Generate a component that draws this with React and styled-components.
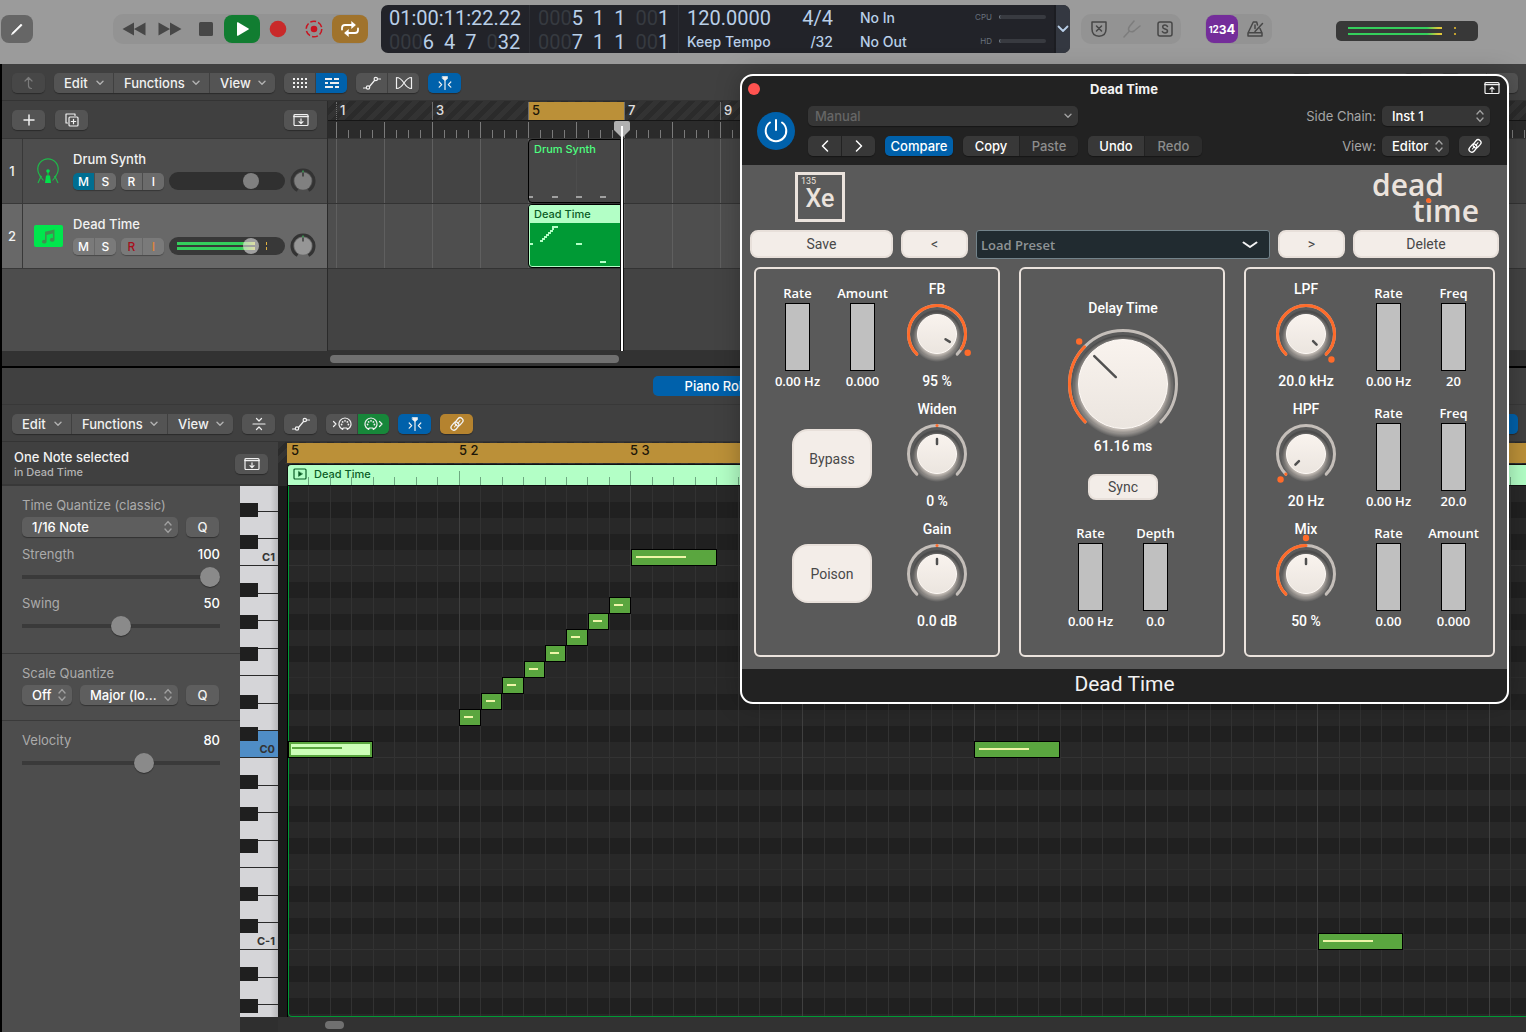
import React, { useState } from "react";
import styled, { createGlobalStyle, css } from "styled-components";

const sans = `Inter, "Liberation Sans", sans-serif`;
const pluginSans = `Roboto, "Liberation Sans", sans-serif`;
const humanist = `"Open Sans", "Noto Sans", sans-serif`;

// piano roll geometry
const CELL = 21.46;
const ROW = 16;
const cellX = i => Math.floor(0.5 + i * CELL);
const noteX = i => Math.floor(i * CELL + 1) || 1;

const notes = [
  { cell: 0, len: 4, row: 16, selected: true },
  { cell: 8, len: 1, row: 14 },
  { cell: 9, len: 1, row: 13 },
  { cell: 10, len: 1, row: 12 },
  { cell: 11, len: 1, row: 11 },
  { cell: 12, len: 1, row: 10 },
  { cell: 13, len: 1, row: 9 },
  { cell: 14, len: 1, row: 8 },
  { cell: 15, len: 1, row: 7 },
  { cell: 16, len: 4, row: 4 },
  { cell: 32, len: 4, row: 16 },
  { cell: 48, len: 4, row: 28 }
];

const octave = [28, 27, 28, 27, 28, 27, 27];
const whiteKeys = [26, 27, 27, ...octave, ...octave, ...octave];
const keyNames = { 2: "C1", 9: "C0", 16: "C-1" };
const blackKeys = [17, 49];
[0, 1, 2].forEach(o => {
  [97, 129, 161, 209, 241].forEach(y => blackKeys.push(y + o * 192));
});

/* ---------- icons ---------- */

const Icon = ({ w = 16, h = 16, children, fill = "none", sw = 1.2 }) => (
  <svg
    width={w}
    height={h}
    viewBox={`0 0 ${w} ${h}`}
    fill={fill}
    stroke={fill === "none" ? "currentColor" : "none"}
    strokeWidth={sw}
    strokeLinecap="round"
    strokeLinejoin="round"
    aria-hidden="true"
  >
    {children}
  </svg>
);

const Chevron = () => (
  <Icon w={8} h={6} sw={1.4}>
    <path d="M1 1.2l3 3 3-3" />
  </Icon>
);

const UpDown = () => (
  <Icon w={8} h={14} sw={1.4}>
    <path d="M1 5l3-3.4L7 5M1 9l3 3.4L7 9" />
  </Icon>
);

const CurveIcon = () => (
  <Icon w={20} h={14}>
    <path d="M1.500 12h3M7.500 10.500l5-6M15.500 3h3" />
    <circle cx="6" cy="11.500" r="1.700" />
    <circle cx="13.800" cy="3" r="1.700" />
  </Icon>
);

const CatchIcon = () => (
  <Icon w={18} h={16}>
    <path d="M9 3v11.500" />
    <path d="M6.500 1.500h5v2.200L9 5.500 6.500 3.700z" fill="currentColor" strokeWidth="0.600" />
    <path d="M3.200 7l2.500 2.600-2.500 2.600M14.800 7l-2.500 2.600 2.500 2.600" />
  </Icon>
);

const PanelIcon = ({ up }) => (
  <Icon w={16} h={14}>
    <rect x="1" y="1.500" width="14" height="11" rx="1" />
    <path d="M1 3.500h14" strokeWidth="1.600" />
    {up ? <path d="M8 11V6.500M6 8.200l2-2 2 2" /> : <path d="M8 5.800v4.500M6 8.600l2 2 2-2" />}
  </Icon>
);

const LinkIcon = () => (
  <Icon w={16} h={16} sw={1.300}>
    <g transform="rotate(-50 8 8)">
      <rect x="0.500" y="5" width="9" height="5.600" rx="2.800" />
      <rect x="6.500" y="5.400" width="9" height="5.600" rx="2.800" />
      <path d="M4 7.900h3.500M9 8.200h3.500" strokeWidth="1" />
    </g>
  </Icon>
);

const MidiIcon = ({ out }) => (
  <Icon w={20} h={14}>
    <g transform={out ? "translate(0 0)" : "translate(6 0)"}>
      <path d="M4.600 12.500a6 6 0 1 1 4.800 0l-.6-1.500H5.200z" />
      <g fill="currentColor" stroke="none">
        <circle cx="3.600" cy="7.500" r=".9" />
        <circle cx="4.600" cy="4.900" r=".9" />
        <circle cx="7" cy="3.800" r=".9" />
        <circle cx="9.400" cy="4.900" r=".9" />
        <circle cx="10.400" cy="7.500" r=".9" />
      </g>
    </g>
    {out ? <path d="M15.500 4.500l2.500 2.500-2.500 2.500" /> : <path d="M1.500 4.500L4 7 1.500 9.500" />}
  </Icon>
);

const DrumIcon = () => (
  <svg width="26" height="28" viewBox="0 0 26 28" fill="none" stroke="#1fb84a" strokeWidth="1.200">
    <path d="M6.800 20.200A10.200 10.200 0 1 1 19.200 20.200" />
    <path d="M13 13v6M6.200 19L3 26M19.800 19L23 26M4.500 18.500l4 5M21.500 18.500l-4 5" />
    <circle cx="13" cy="14" r="1.800" fill="#00e04a" stroke="none" />
    <path d="M11 18.500h4l1 7.500h-6z" fill="#00e04a" stroke="none" />
  </svg>
);

const NoteIcon = () => (
  <svg width="14" height="15" viewBox="0 0 14 15" fill="#3f8f4f">
    <path d="M4 2.800L13.500.5v10.200a2.300 1.900 0 1 1-1.600-1.700V4.500L5.600 6v6.600A2.300 1.900 0 1 1 4 10.900z" />
  </svg>
);

/* ---------- shared parts ---------- */

const GlobalStyle = createGlobalStyle`
  * { box-sizing: border-box; }
  body { margin: 0; background: #000; font-family: ${sans}; font-size: 13px; color: #f2f2f2; }
  button, input, select { font: inherit; color: inherit; margin: 0; padding: 0; border: 0; background: none; }
  h1, h2, h3, p { margin: 0; font-size: inherit; font-weight: inherit; }
  svg { display: block; flex: none; }
`;

const Page = styled.div`
  position: relative;
  display: flex;
  flex-direction: column;
  min-height: 100vh;
  overflow: hidden;
`;

const tones = {
  grey: "#545454",
  dim: "#474747",
  blue: "#0061ab",
  green: "#17873a",
  gold: "#b5832f"
};

const Group = styled.div`
  display: flex;
  flex: none;
  gap: 1px;
  height: 20px;
  border-radius: 5px;
  overflow: hidden;
  box-shadow: 0 1px 1px rgba(0, 0, 0, 0.35);
  margin-left: ${props => (props.$right ? "auto" : "0")};
`;

const Tool = styled.button`
  display: flex;
  align-items: center;
  justify-content: ${props => (props.$menu ? "space-between" : "center")};
  width: ${props => props.$w || 33}px;
  height: 20px;
  padding: ${props => (props.$menu ? "0 9px 0 10px" : "0")};
  font-weight: 500;
  color: ${props => (props.$tone === "dim" ? "#7c7c7c" : "#f0f0f0")};
  background: ${props => tones[props.$tone || "grey"]};
  svg {
    opacity: ${props => (props.$menu ? 0.6 : 1)};
  }
`;

const SelectWrap = styled.span`
  position: relative;
  display: flex;
  align-items: center;
  flex: ${props => (props.$grow ? "1" : "none")};
  width: ${props => (props.$w ? props.$w + "px" : "auto")};
  height: ${props => props.$h || 20}px;
  border-radius: 5px;
  background: ${props => props.$bg || "#5e5e5e"};
  box-shadow: 0 1px 1px rgba(0, 0, 0, 0.35);
  svg {
    position: absolute;
    right: 6px;
    color: #a0a0a0;
    pointer-events: none;
  }
`;

const Select = styled.select`
  appearance: none;
  width: 100%;
  height: 100%;
  padding: 0 ${props => (props.$tight ? 7 : 10)}px;
  font-weight: 500;
  color: ${props => props.$color || "#fff"};
`;

const MenuGroup = () => (
  <Group>
    <Tool $menu $w={59}>
      Edit <Chevron />
    </Tool>
    <Tool $menu $w={95}>
      Functions <Chevron />
    </Tool>
    <Tool $menu $w={65}>
      View <Chevron />
    </Tool>
  </Group>
);

const Toolbar = styled.div`
  display: flex;
  align-items: center;
  gap: 9px;
  height: ${props => props.$h || 37}px;
  padding: 2px 8px 0 10px;
  background: #404040;
  border-bottom: 1px solid #343434;
`;

/* ---------- control bar ---------- */

const ControlBar = styled.header`
  display: flex;
  align-items: center;
  height: 64px;
  padding: 0 48px 6px 1px;
  background: #9b9b9b;
`;

const ModeButton = styled.button`
  display: flex;
  align-items: center;
  justify-content: center;
  width: 32px;
  height: 28px;
  border-radius: 8px;
  background: #666;
  color: #fff;
`;

const Cluster = styled.div`
  display: flex;
  align-items: center;
  flex: none;
  height: 30px;
  border-radius: 10px;
  background: #939393;
  padding-left: ${props => props.$pad || 0}px;
  margin-left: ${props => props.$gap}px;
`;

const ClusterButton = styled.button`
  display: flex;
  align-items: center;
  justify-content: center;
  width: ${props => props.$w || 36}px;
  height: 28px;
  border-radius: 8px;
  background: ${props => props.$bg || "transparent"};
  color: ${props => props.$color || "#474747"};
`;

const CountIn = styled.span`
  font-size: ${props => props.$size}px;
  font-weight: 700;
`;

const Lcd = styled.div`
  display: flex;
  flex: 1;
  height: 48px;
  margin-left: 13px;
  border-radius: 7px;
  overflow: hidden;
  background: #222329;
  color: #b9cfe8;
`;

const LcdCol = styled.div`
  display: flex;
  flex: none;
  flex-direction: column;
  align-items: ${props => props.$align || "flex-start"};
  justify-content: center;
  width: ${props => props.$w}px;
  padding: 1px ${props => (props.$align ? 18 : 7)}px 0 8px;
  border-right: 1px solid ${props => (props.$line ? "#2c2e34" : "transparent")};
`;

const LcdRow = styled.div`
  display: flex;
  gap: 10px;
  height: 24px;
  line-height: 24px;
  white-space: nowrap;
  font-family: ${props => (props.$word ? sans : pluginSans)};
  font-size: ${props => (props.$word ? 14 : 20)}px;
  font-weight: ${props => (props.$word ? 500 : 400)};
`;

const Faint = styled.span`
  color: #363a40;
`;

const LoadCol = styled.div`
  display: flex;
  flex: 1;
  flex-direction: column;
  align-items: flex-end;
  justify-content: center;
  gap: 14px;
  padding: 0 8px 1px 0;
`;

const Load = styled.div`
  display: flex;
  align-items: center;
  gap: 7px;
  font-size: 8px;
  line-height: 10px;
  color: #69727d;
`;

const LoadMeter = styled.span`
  width: 47px;
  height: 4px;
  border-radius: 2px;
  background: #383a40;
  border-left: 1px solid #74808c;
`;

const LcdMore = styled.button`
  display: flex;
  align-items: center;
  justify-content: center;
  width: 16px;
  background: #343841;
  border-left: 2px solid #1c1d22;
  color: #b9cfe8;
`;

const MasterMeter = styled.div`
  flex: none;
  width: 142px;
  height: 20px;
  margin-left: 64px;
  margin-top: 4px;
  padding: 6px 36px 0 12px;
  border-radius: 5px;
  background: linear-gradient(#c2a030, #c2a030) 118px 6px / 2px 2px no-repeat,
    linear-gradient(#c2a030, #c2a030) 118px 12px / 2px 2px no-repeat, #383838;
`;

const MeterLine = styled.div`
  height: 2px;
  margin-bottom: 4px;
  background: linear-gradient(90deg, #34cf5c 0 84%, #e0c83a 96%);
`;

const digits = (faint, rest) => (
  <span>
    <Faint>{faint}</Faint>
    {rest}
  </span>
);

const TopBar = () => (
  <ControlBar>
    <ModeButton aria-label="Pencil">
      <Icon w={16} h={16} sw={1.800}>
        <path d="M2.500 13.500l1-2L12 3l1.200 1.200-8.700 8.500z" fill="currentColor" strokeWidth=".5" />
      </Icon>
    </ModeButton>
    <Cluster $gap={80} $pad={3}>
      <ClusterButton aria-label="Rewind">
        <Icon w={24} h={14} fill="#474747">
          <path d="M12 .5v13L.500 7zM23.500.5v13L12 7z" />
        </Icon>
      </ClusterButton>
      <ClusterButton aria-label="Forward">
        <Icon w={24} h={14} fill="#474747">
          <path d="M.5.5v13L12 7zM12 .5v13L23.500 7z" />
        </Icon>
      </ClusterButton>
      <ClusterButton aria-label="Stop">
        <Icon w={14} h={14} fill="#474747">
          <rect width="14" height="14" rx="1.500" />
        </Icon>
      </ClusterButton>
      <ClusterButton aria-label="Play" $bg="#117d31">
        <Icon w={16} h={14} fill="#fff">
          <path d="M3 .8v12.400q0 1 1 .5L14.500 7.500q.8-.5 0-1L4 .3q-1-.5-1 .5z" />
        </Icon>
      </ClusterButton>
      <ClusterButton aria-label="Record">
        <Icon w={18} h={18} fill="#c92a2a">
          <circle cx="9" cy="9" r="8.300" />
        </Icon>
      </ClusterButton>
      <ClusterButton aria-label="Capture recording" $color="#c81420">
        <Icon w={18} h={18} sw={1.500}>
          <circle cx="9" cy="9" r="7.800" strokeDasharray="6 2.170" strokeLinecap="butt" />
          <circle cx="9" cy="9" r="3.300" fill="currentColor" stroke="none" />
        </Icon>
      </ClusterButton>
      <ClusterButton aria-label="Cycle" $bg="#a0732c" $color="#fff">
        <Icon w={20} h={16} sw={1.800}>
          <path d="M2 8.500V7q0-3 3-3h9M18 7.500V9q0 3-3 3H6" />
          <path d="M11.800.8L15.500 4l-3.700 3.200zM8.200 8.800L4.500 12l3.700 3.200z" fill="currentColor" strokeWidth=".6" />
        </Icon>
      </ClusterButton>
    </Cluster>
    <Lcd>
      <LcdCol $w={149} $line>
        <LcdRow>01:00:11:22.22</LcdRow>
        <LcdRow>
          {digits("000", "6")}
          <span>4</span>
          <span>7</span>
          {digits("0", "32")}
        </LcdRow>
      </LcdCol>
      <LcdCol $w={149} $line>
        <LcdRow>
          {digits("000", "5")}
          <span>1</span>
          <span>1</span>
          {digits("00", "1")}
        </LcdRow>
        <LcdRow>
          {digits("000", "7")}
          <span>1</span>
          <span>1</span>
          {digits("00", "1")}
        </LcdRow>
      </LcdCol>
      <LcdCol $w={106}>
        <LcdRow>120.0000</LcdRow>
        <LcdRow $word>Keep Tempo</LcdRow>
      </LcdCol>
      <LcdCol $w={67} $align="flex-end">
        <LcdRow>4/4</LcdRow>
        <LcdRow $word>/32</LcdRow>
      </LcdCol>
      <LcdCol $w={80}>
        <LcdRow $word>No In</LcdRow>
        <LcdRow $word>No Out</LcdRow>
      </LcdCol>
      <LoadCol>
        <Load>
          CPU <LoadMeter />
        </Load>
        <Load>
          HD <LoadMeter />
        </Load>
      </LoadCol>
      <LcdMore aria-label="Display mode">
        <Icon w={12} h={8} sw={1.800}>
          <path d="M1.500 1.500L6 6l4.500-4.500" />
        </Icon>
      </LcdMore>
    </Lcd>
    <Cluster $gap={11} $pad={1}>
      <ClusterButton $w={33} aria-label="Replace">
        <Icon w={16} h={16} sw={1.500}>
          <path d="M1 1h14v7q0 7-7 7.200Q1 15 1 8zM5.500 5l5 5M10.500 5l-5 5" />
        </Icon>
      </ClusterButton>
      <ClusterButton $w={33} $color="#7d7d7d" aria-label="Tuner">
        <Icon w={18} h={18} sw={1.500}>
          <path d="M1 17l5.500-6M11 1L6.500 6.500q-2 3 0 4.500t4.500 0L17 6" />
        </Icon>
      </ClusterButton>
      <ClusterButton $w={33} aria-label="Solo">
        <Icon w={16} h={16} sw={1.500}>
          <rect x="1" y="1" width="14" height="14" rx="2" />
          <path d="M10.500 5.500Q9.500 4 8 4 5.700 4 5.700 5.900 5.700 7.400 8 7.900q2.500.5 2.500 2.200Q10.500 12 8 12q-1.700 0-2.600-1.400" />
        </Icon>
      </ClusterButton>
    </Cluster>
    <Cluster $gap={24} $pad={1}>
      <ClusterButton $w={32} $bg="#742d9a" $color="#fff" aria-label="Count in">
        <CountIn $size={9}>1</CountIn>
        <CountIn $size={10}>2</CountIn>
        <CountIn $size={12}>3</CountIn>
        <CountIn $size={13}>4</CountIn>
      </ClusterButton>
      <ClusterButton $w={34} aria-label="Metronome">
        <Icon w={18} h={16} sw={1.500}>
          <path d="M11.500 4L10.700 1H7.300L2 12v3h14v-3l-2-4.500M3 11.800h12M9 10.500L16.500 2.500M9 4v3.500" />
        </Icon>
      </ClusterButton>
    </Cluster>
    <MasterMeter>
      <MeterLine />
      <MeterLine />
    </MasterMeter>
  </ControlBar>
);

/* ---------- tracks area ---------- */

const TracksArea = styled.section`
  flex: none;
  margin-left: 2px;
  background: #404040;
`;

const TracksBody = styled.div`
  display: flex;
`;

const TrackHeaders = styled.div`
  flex: none;
  width: 325px;
  background: #4d4d4d;
`;

const HeaderTools = styled.div`
  display: flex;
  align-items: center;
  gap: 10px;
  height: 38px;
  padding: 0 10px;
  background: #404040;
  border-bottom: 1px solid #363636;
`;

const Track = styled.div`
  display: flex;
  height: 65px;
  border-bottom: 1px solid #383838;
  background: ${props => (props.$selected ? "#686868" : "#4d4d4d")};
`;

const TrackNumber = styled.div`
  display: flex;
  align-items: center;
  justify-content: center;
  width: 21px;
  border-right: 1px solid #383838;
  font-weight: 500;
`;

const TrackIcon = styled.div`
  display: flex;
  align-items: center;
  justify-content: center;
  width: 50px;
`;

const GreenTile = styled.span`
  display: flex;
  align-items: center;
  justify-content: center;
  width: 29px;
  height: 22px;
  border-radius: 2px;
  background: #00e64d;
`;

const TrackMain = styled.div`
  padding-top: 10px;
`;

const TrackName = styled.h3`
  line-height: 20px;
  font-weight: 500;
`;

const TrackRow = styled.div`
  display: flex;
  align-items: center;
  gap: 5px;
  height: 24px;
`;

const Pair = styled.div`
  display: flex;
  gap: 1px;
  border-radius: 5px;
  overflow: hidden;
  box-shadow: 0 1px 1px rgba(0, 0, 0, 0.3);
`;

const TinyButton = styled.button`
  width: 21px;
  height: 17px;
  font-weight: 500;
  font-size: 12px;
  background: ${props => props.$bg || "#6b6b6b"};
  color: ${props => props.$color || "#fff"};
`;

const Volume = styled.input`
  appearance: none;
  display: block;
  width: 116px;
  height: 18px;
  border-radius: 9px;
  background: #303030;
  ${props =>
    props.$live &&
    css`
      background: linear-gradient(90deg, #34cf5c 0 82%, #d4cf48) 8px 5px / 78px 3px no-repeat,
        linear-gradient(90deg, #34cf5c 0 82%, #d4cf48) 8px 10px / 78px 3px no-repeat,
        linear-gradient(#e0b040, #e0b040) 97px 5px / 1px 3px no-repeat,
        linear-gradient(#e0b040, #e0b040) 97px 10px / 1px 3px no-repeat, #383838;
    `}
  &::-webkit-slider-thumb {
    appearance: none;
    width: 16px;
    height: 16px;
    border-radius: 8px;
    background: ${props => (props.$live ? "rgba(230,230,230,.6)" : "#808080")};
  }
`;

const Pan = ({ bright }) => (
  <svg width="26" height="26" viewBox="0 0 26 26" role="img" aria-label="Pan">
    <path d="M7.500 22.500A11 11 0 1 1 18.500 22.500" fill="none" stroke="#333" strokeWidth="3" />
    <circle cx="13" cy="13" r="8.700" fill={bright ? "#969696" : "#808080"} />
    <path d="M13 2.500v2" stroke="#34cf5c" />
    <path d="M13 4.500v4" stroke="#111" />
  </svg>
);

const TrackHeader = ({ number, name, selected, icon }) => {
  const [volume, setVolume] = useState(74);
  return (
    <Track $selected={selected}>
      <TrackNumber>{number}</TrackNumber>
      <TrackIcon>{icon}</TrackIcon>
      <TrackMain>
        <TrackName>{name}</TrackName>
        <TrackRow>
          <Pair>
            <TinyButton $bg={selected ? "#7a7a7a" : "#006e91"}>M</TinyButton>
            <TinyButton $bg={selected && "#7a7a7a"}>S</TinyButton>
          </Pair>
          <Pair>
            <TinyButton $bg={selected && "#7a7a7a"} $color={selected && "#a80f1c"}>
              R
            </TinyButton>
            <TinyButton $bg={selected && "#7a7a7a"} $color={selected && "#e0853a"}>
              I
            </TinyButton>
          </Pair>
          <Volume
            type="range"
            aria-label={name + " volume"}
            $live={selected}
            value={volume}
            onChange={e => setVolume(e.target.value)}
          />
          <Pan bright={selected} />
        </TrackRow>
      </TrackMain>
    </Track>
  );
};

const Lanes = styled.div`
  position: relative;
  flex: 1;
  min-width: 0;
  overflow: hidden;
  border-left: 1px solid #2a2a2a;
  background: #434343;
`;

const hatch = `repeating-linear-gradient(135deg, #333 0 5px, #2b2b2b 5px 10px)`;

const Ruler = styled.div`
  display: flex;
  height: 20px;
  padding: 1px 0 0 8px;
  border-bottom: 1px solid #161616;
  background: ${hatch};
`;

const Bar = styled.div`
  flex: none;
  width: 96px;
  height: 18px;
  padding-left: 3px;
  line-height: 16px;
  font-weight: 500;
  border-left: 1px ${props => (props.$first ? "dotted" : "solid")} #6e6e6e;
  color: ${props => (props.$cycle ? "#1c1608" : "#e0e0e0")};
  background: ${props => (props.$cycle ? "#bb9038" : "transparent")};
`;

const tick = `linear-gradient(90deg, #7a7a7a 1px, transparent 1px)`;

const Ticks = styled.div`
  height: 18px;
  border-bottom: 1px solid #363636;
  background: ${tick} 8px 9px / 12px 8px repeat-x, ${tick} 8px 1px / 48px 16px repeat-x, #2b2b2b;
`;

const Lane = styled.div`
  position: relative;
  height: 65px;
  border-bottom: 1px solid #333;
  background: linear-gradient(90deg, #5f5f5f 1px, transparent 1px) 8px 0 / 48px 100%,
    ${props => (props.$selected ? "#4e4e4e" : "#444")};
`;

const LaneBlank = styled.div`
  height: 82px;
  border-bottom: 1px solid #333;
`;

const Region = styled.div`
  position: absolute;
  top: 0;
  width: 96px;
  height: 64px;
  overflow: hidden;
  border: 1px solid #000;
  border-radius: 4px;
  background: ${props => (props.$filled ? "#009a35" : "rgba(72,72,72,.8)")};
  box-shadow: ${props => (props.$filled ? "inset 0 0 0 1px #b3ffc6" : "none")};
`;

const RegionTitle = styled.h3`
  height: 18px;
  padding-left: 5px;
  line-height: 18px;
  font-size: 11px;
  font-weight: 500;
  color: ${props => (props.$filled ? "#0a5c25" : "#4dff80")};
  background: ${props => (props.$filled ? "#b3ffc6" : "transparent")};
`;

const MiniNotes = ({ color, marks, h }) => (
  <svg width="94" height={h} fill={color} shapeRendering="crispEdges">
    {marks.map(([x, y, w]) => (
      <rect key={x + "-" + y} x={x} y={y} width={w} height="2" />
    ))}
  </svg>
);

const drumMarks = [[0, 38, 4], [23, 38, 6], [47, 38, 6], [71, 38, 6]];
const deadMarks = [
  [1, 20, 3], [11, 17, 3], [13, 15, 3], [15, 13, 3], [17, 11, 3], [19, 9, 3],
  [21, 7, 3], [23, 5, 2], [23, 3, 6], [47, 20, 6], [71, 38, 6]
];

const Playhead = styled.div`
  position: absolute;
  top: 20px;
  bottom: 0;
  display: flex;
  flex-direction: column;
  align-items: center;
  width: 18px;
`;

const PlayheadLine = styled.div`
  flex: 1;
  width: 4px;
  background: #fff;
  border: solid #111;
  border-width: 0 1px;
`;

const ScrollTrack = styled.div`
  display: flex;
  align-items: center;
  height: ${props => props.$h}px;
  padding-left: ${props => props.$pad || 0}px;
  background: #323232;
`;

const ScrollThumb = styled.div`
  width: ${props => props.$w}px;
  height: 8px;
  border-radius: 4px;
  background: #707070;
`;

const Tracks = () => (
  <TracksArea>
    <Toolbar>
      <Group>
        <Tool $tone="dim" aria-label="Up">
          <Icon w={14} h={14}>
            <path d="M3 5l3.500-3.500L10 5M6.500 1.500v8q0 3 3 3" />
          </Icon>
        </Tool>
      </Group>
      <MenuGroup />
      <Group>
        <Tool $w={31} aria-label="Grid">
          <Icon w={16} h={12} fill="currentColor">
            {[0, 4, 8].map(y => [1, 5, 9, 13].map(x => <rect key={x + "" + y} x={x} y={y + 1} width="2" height="2" />))}
          </Icon>
        </Tool>
        <Tool $w={31} $tone="blue" aria-label="Regions">
          <Icon w={16} h={12} fill="currentColor">
            <path d="M1 1h7v2H1zM10 1h5v2h-5zM1 5h3v2H1zM6 5h9v2H6zM1 9h8v2H1zM11 9h4v2h-4z" />
          </Icon>
        </Tool>
      </Group>
      <Group>
        <Tool $w={31} aria-label="Automation">
          <CurveIcon />
        </Tool>
        <Tool $w={31} aria-label="Flex">
          <Icon w={18} h={14}>
            <path d="M1.500 1.500v11q4 0 7.500-5.500t7.500-5.500v11q-4 0-7.500-5.500T1.500 1.500z" />
          </Icon>
        </Tool>
      </Group>
      <Group>
        <Tool $tone="blue" aria-label="Catch">
          <CatchIcon />
        </Tool>
      </Group>
      <Group $right>
        <Tool $w={160} aria-label="Snap" />
      </Group>
      <Group>
        <Tool $w={103} aria-label="Drag" />
      </Group>
      <Group>
        <Tool $w={28} aria-label="Zoom" />
      </Group>
      <Group>
        <Tool $w={31} aria-label="Zoom vertically" />
        <Tool $w={31} aria-label="Zoom horizontally" />
      </Group>
    </Toolbar>
    <TracksBody>
      <TrackHeaders>
        <HeaderTools>
          <Group>
            <Tool aria-label="New track">
              <Icon w={12} h={12} sw={1.500}>
                <path d="M6 1v10M1 6h10" />
              </Icon>
            </Tool>
          </Group>
          <Group>
            <Tool aria-label="Duplicate track">
              <Icon w={14} h={14}>
                <rect x="4" y="4" width="9" height="9" rx="1" />
                <path d="M2.500 10H1V1h9v1.500M8.500 6.300v4.400M6.300 8.500h4.400" />
              </Icon>
            </Tool>
          </Group>
          <Group $right>
            <Tool aria-label="Track header options">
              <PanelIcon />
            </Tool>
          </Group>
        </HeaderTools>
        <TrackHeader number="1" name="Drum Synth" icon={<DrumIcon />} />
        <TrackHeader
          number="2"
          name="Dead Time"
          selected
          icon={
            <GreenTile>
              <NoteIcon />
            </GreenTile>
          }
        />
      </TrackHeaders>
      <Lanes>
        <Ruler>
          {[1, 3, 5, 7, 9].map(n => (
            <Bar key={n} $first={n === 1} $cycle={n === 5}>
              {n}
            </Bar>
          ))}
        </Ruler>
        <Ticks />
        <Lane>
          <Region style={{ left: 8 + 4 * 48 }}>
            <RegionTitle>Drum Synth</RegionTitle>
            <MiniNotes color="#a0a0a0" marks={drumMarks} h={44} />
          </Region>
        </Lane>
        <Lane $selected>
          <Region $filled style={{ left: 8 + 4 * 48 }}>
            <RegionTitle $filled>Dead Time</RegionTitle>
            <MiniNotes color="#b3ffc6" marks={deadMarks} h={44} />
          </Region>
        </Lane>
        <LaneBlank />
        <Playhead style={{ left: 285 }}>
          <svg width="18" height="18" viewBox="0 0 18 18">
            <path d="M3 0h12q2 0 2 2v7l-8 8-8-8V2q0-2 2-2z" fill="#b0b0b0" />
            <path d="M9 5v13" stroke="#fff" strokeWidth="2" />
          </svg>
          <PlayheadLine />
        </Playhead>
      </Lanes>
    </TracksBody>
    <ScrollTrack $h={15} $pad={328}>
      <ScrollThumb $w={289} />
    </ScrollTrack>
  </TracksArea>
);

/* ---------- piano roll ---------- */

const Editor = styled.section`
  display: flex;
  flex: 1;
  flex-direction: column;
  margin: 2px 0 0 2px;
  background: #404040;
`;

const TabStrip = styled.nav`
  display: flex;
  align-items: center;
  height: 37px;
  padding-left: 651px;
  border-bottom: 1px solid #383838;
`;

const Tab = styled.button`
  width: 124px;
  height: 20px;
  border-radius: 5px;
  font-weight: 500;
  color: #fff;
  background: #0061ab;
`;

const EditorBody = styled.div`
  display: flex;
  flex: 1;
`;

const LeftCol = styled.div`
  display: flex;
  flex: none;
  flex-direction: column;
  width: 276px;
`;

const SelectionInfo = styled.div`
  display: flex;
  align-items: center;
  justify-content: space-between;
  height: 44px;
  padding: 2px 10px 0 12px;
  border-bottom: 2px solid #383838;
`;

const SelectionTitle = styled.h2`
  line-height: 17px;
  font-weight: 500;
`;

const SelectionSub = styled.p`
  line-height: 13px;
  font-size: 11px;
  font-weight: 500;
  color: #b4b4b4;
`;

const InspectorRow = styled.div`
  display: flex;
  flex: 1;
`;

const Inspector = styled.div`
  flex: none;
  width: 238px;
  background: #4d4d4d;
`;

const Section = styled.div`
  padding: 9px 20px ${props => props.$bottom || 15}px;
  border-bottom: ${props => (props.$last ? "0" : "1px solid #3a3a3a")};
`;

const FieldLabel = styled.label`
  display: flex;
  justify-content: space-between;
  line-height: 20px;
  color: #ababab;
  margin-top: ${props => props.$top || 0}px;
`;

const FieldValue = styled.span`
  color: #fff;
  font-weight: 500;
`;

const Controls = styled.div`
  display: flex;
  gap: 8px;
  margin-top: 2px;
`;

const QButton = styled.button`
  width: 33px;
  height: 20px;
  border-radius: 5px;
  font-weight: 500;
  background: #5e5e5e;
  box-shadow: 0 1px 1px rgba(0, 0, 0, 0.35);
`;

const Slider = styled.input`
  appearance: none;
  display: block;
  width: 100%;
  height: 20px;
  margin-top: 3px;
  background: linear-gradient(#3a3a3a, #3a3a3a) 0 8px / 100% 4px no-repeat;
  &::-webkit-slider-thumb {
    appearance: none;
    width: 20px;
    height: 20px;
    border-radius: 10px;
    background: #8a8a8a;
    box-shadow: 0 1px 1px rgba(0, 0, 0, 0.4);
  }
`;

const ValueSlider = ({ id, label, start, max, top }) => {
  const [value, setValue] = useState(start);
  return (
    <>
      <FieldLabel htmlFor={id} $top={top}>
        {label} <FieldValue>{value}</FieldValue>
      </FieldLabel>
      <Slider id={id} type="range" min="0" max={max} value={value} onChange={e => setValue(e.target.value)} />
    </>
  );
};

const KeyboardCol = styled.div`
  display: flex;
  flex: 1;
  flex-direction: column;
  background: #2f2f2f;
  padding-bottom: 15px;
`;

const Keyboard = styled.div`
  position: relative;
  flex: 1 1 0;
  min-height: 300px;
  overflow: hidden;
`;

const WhiteKey = styled.div`
  display: flex;
  align-items: flex-end;
  justify-content: flex-end;
  height: ${props => props.$h}px;
  padding: 0 3px 2px 0;
  line-height: 12px;
  font-size: 11px;
  font-weight: 700;
  color: #333;
  border-bottom: 1px solid #2a2a2a;
  background: ${props => (props.$active ? "#4f8dc6" : "linear-gradient(90deg,#d5d5d8 80%,#b8b8bb)")};
`;

const BlackKey = styled.div`
  position: absolute;
  left: 0;
  width: 18px;
  height: 14px;
  background: #1f1f1f;
`;

const RollCol = styled.div`
  display: flex;
  flex: 1;
  flex-direction: column;
  min-width: 0;
  overflow: hidden;
`;

const RollRuler = styled.div`
  display: flex;
  height: 22px;
  padding: 1px 0 1px 9px;
  background: ${hatch};
`;

const RulerGold = styled.div`
  position: relative;
  flex: 1;
  background: #bb9038;
  color: #1c1608;
  font-weight: 500;
  line-height: 15px;
`;

const BeatLabel = styled.span`
  position: absolute;
  white-space: nowrap;
`;

const RegionStrip = styled.div`
  height: 22px;
  padding-left: 9px;
  background: #2b2b2b;
`;

const RegionHead = styled.div`
  position: relative;
  display: flex;
  align-items: center;
  gap: 7px;
  height: 22px;
  padding: 0 0 3px 5px;
  border: solid #111;
  border-width: 1px 0 1px 1px;
  border-radius: 4px 0 0 0;
  overflow: hidden;
  color: #0a5c25;
  background: #b3ffc6;
  font-size: 11px;
  font-weight: 500;
`;

const HeadTick = styled.i`
  position: absolute;
  bottom: 0;
  width: 1px;
  height: ${props => (props.$beat ? 14 : 8)}px;
  background: #6da880;
`;

const RollMain = styled.div`
  display: flex;
  flex: 1 1 0;
  min-height: 300px;
  overflow: hidden;
  padding-left: 9px;
  background: #1b1b1b;
`;

const Canvas = styled.div`
  position: relative;
  flex: 1;
  overflow: hidden;
  border-left: 1px solid #000;
  background: repeating-linear-gradient(
    #282828 0 16px,
    #202020 16px 32px,
    #282828 32px 48px,
    #202020 48px 64px,
    #282828 64px 79px,
    #333 79px 80px,
    #282828 80px 96px,
    #202020 96px 112px,
    #282828 112px 128px,
    #202020 128px 144px,
    #282828 144px 160px,
    #202020 160px 176px,
    #282828 176px 191px,
    #2d2d2d 191px 192px
  );
`;

const GridLine = styled.i`
  position: absolute;
  top: 0;
  bottom: 0;
  width: 1px;
  background: ${props => (props.$beat ? "#404040" : "#323232")};
`;

const RegionEdge = styled.div`
  position: absolute;
  inset: 0 0 0 0;
  border: solid #009a35;
  border-width: 0 0 1px 1px;
  border-radius: 0 0 0 4px;
`;

const Note = styled.div`
  position: absolute;
  height: 17px;
  border: 1px solid #000;
  padding: ${props => (props.$selected ? 4 : 6)}px 0 0 ${props => (props.$selected ? 1 : 4)}px;
  background: ${props => (props.$selected ? "#cdffb8" : "#5aa63f")};
  box-shadow: ${props => (props.$selected ? "inset 0 0 0 2px #5aa63f" : "none")};
  &::after {
    content: "";
    display: block;
    width: ${props => (props.$long ? 50 : 9)}px;
    height: 2px;
    margin-left: ${props => (props.$selected ? 2 : 0)}px;
    margin-top: ${props => (props.$selected ? 1 : 0)}px;
    background: ${props => (props.$selected ? "#5aa63f" : "#eef5a8")};
  }
`;

const lines = Array.from({ length: 120 }, (_, i) => i + 1);

const PianoRoll = () => (
  <Editor>
    <TabStrip>
      <Tab>Piano Roll</Tab>
    </TabStrip>
    <Toolbar>
      <MenuGroup />
      <Group>
        <Tool aria-label="Collapse">
          <Icon w={14} h={14}>
            <path d="M1 7h12M4.500 1.500L7 4l2.500-2.500M4.500 12.500L7 10l2.500 2.500" />
          </Icon>
        </Tool>
      </Group>
      <Group>
        <Tool aria-label="Automation">
          <CurveIcon />
        </Tool>
      </Group>
      <Group>
        <Tool $w={31} aria-label="Midi in">
          <MidiIcon />
        </Tool>
        <Tool $w={31} $tone="green" aria-label="Midi out">
          <MidiIcon out />
        </Tool>
      </Group>
      <Group>
        <Tool $tone="blue" aria-label="Catch">
          <CatchIcon />
        </Tool>
      </Group>
      <Group>
        <Tool $tone="gold" aria-label="Link">
          <LinkIcon />
        </Tool>
      </Group>
      <Group $right>
        <Tool $tone="blue" aria-label="Zoom" />
      </Group>
    </Toolbar>
    <EditorBody>
      <LeftCol>
        <SelectionInfo>
          <div>
            <SelectionTitle>One Note selected</SelectionTitle>
            <SelectionSub>in Dead Time</SelectionSub>
          </div>
          <Group>
            <Tool aria-label="Inspector options">
              <PanelIcon />
            </Tool>
          </Group>
        </SelectionInfo>
        <InspectorRow>
          <Inspector>
            <Section $bottom={17}>
              <FieldLabel htmlFor="quantize">Time Quantize (classic)</FieldLabel>
              <Controls>
                <SelectWrap $w={156}>
                  <Select id="quantize">
                    <option>1/16 Note</option>
                  </Select>
                  <UpDown />
                </SelectWrap>
                <QButton>Q</QButton>
              </Controls>
              <ValueSlider id="strength" label="Strength" start={100} max={100} top={7} />
              <ValueSlider id="swing" label="Swing" start={50} max={100} top={6} />
            </Section>
            <Section>
              <FieldLabel htmlFor="scale">Scale Quantize</FieldLabel>
              <Controls>
                <SelectWrap $w={50}>
                  <Select id="scale">
                    <option>Off</option>
                  </Select>
                  <UpDown />
                </SelectWrap>
                <SelectWrap $w={98}>
                  <Select aria-label="Scale">
                    <option>Major (lo...</option>
                  </Select>
                  <UpDown />
                </SelectWrap>
                <QButton>Q</QButton>
              </Controls>
            </Section>
            <Section $last>
              <ValueSlider id="velocity" label="Velocity" start={80} max={127} />
            </Section>
          </Inspector>
          <KeyboardCol>
            <Keyboard>
              {whiteKeys.map((h, i) => (
                <WhiteKey key={i} $h={h} $active={i === 9}>
                  {keyNames[i]}
                </WhiteKey>
              ))}
              {blackKeys.map(y => (
                <BlackKey key={y} style={{ top: y }} />
              ))}
            </Keyboard>
          </KeyboardCol>
        </InspectorRow>
      </LeftCol>
      <RollCol>
        <RollRuler>
          <RulerGold>
            {["5", "5 2", "5 3"].map((b, i) => (
              <BeatLabel key={b} style={{ left: cellX(i * 8) + (i ? 0 : 4) }}>
                {b}
              </BeatLabel>
            ))}
          </RulerGold>
        </RollRuler>
        <RegionStrip>
          <RegionHead>
            <Icon w={14} h={12}>
              <rect x="1" y="1" width="12" height="10" rx="1" />
              <path d="M5.500 3.500v5L9.500 6z" fill="currentColor" strokeWidth=".4" />
            </Icon>
            Dead Time
            {lines.map(i => (
              <HeadTick key={i} $beat={i % 8 === 0} style={{ left: cellX(i) - 1 }} />
            ))}
          </RegionHead>
        </RegionStrip>
        <RollMain>
          <Canvas>
            {lines.map(i => (
              <GridLine key={i} $beat={i % 8 === 0} style={{ left: cellX(i) - 1 }} />
            ))}
            <RegionEdge />
            {notes.map(n => (
              <Note
                key={n.cell}
                $selected={n.selected}
                $long={n.len > 1}
                style={{
                  left: noteX(n.cell) - 1,
                  top: n.row * ROW - 1,
                  width: noteX(n.cell + n.len) - noteX(n.cell)
                }}
              />
            ))}
          </Canvas>
        </RollMain>
        <ScrollTrack $h={15} $pad={47}>
          <ScrollThumb $w={19} />
        </ScrollTrack>
      </RollCol>
    </EditorBody>
  </Editor>
);

/* ---------- plug-in window ---------- */

const Window = styled.section`
  position: absolute;
  left: 740px;
  top: 74px;
  width: 769px;
  border: 2px solid #fff;
  border-radius: 13px;
  overflow: hidden;
  background: #222;
  box-shadow: 0 0 24px rgba(0, 0, 0, 0.25);
`;

const WindowTitle = styled.div`
  display: grid;
  grid-template-columns: 1fr auto 1fr;
  align-items: center;
  height: 26px;
  padding: 0 7px 0 6px;
  font-weight: 700;
`;

const CloseDot = styled.button`
  width: 12px;
  height: 12px;
  border-radius: 6px;
  background: #ff5350;
`;

const PopOut = styled.button`
  justify-self: end;
  padding-bottom: 3px;
`;

const WindowHeader = styled.div`
  display: flex;
  gap: 13px;
  padding: 4px 17px 9px 15px;
`;

const Power = styled.button`
  display: flex;
  align-items: center;
  justify-content: center;
  width: 38px;
  height: 38px;
  margin-top: 6px;
  border-radius: 19px;
  background: #0061ab;
  color: #fff;
`;

const HeaderRows = styled.div`
  display: flex;
  flex: 1;
  flex-direction: column;
  gap: 10px;
`;

const HeaderRow = styled.div`
  display: flex;
  align-items: center;
  gap: 10px;
  height: 20px;
`;

const Side = styled.div`
  display: flex;
  align-items: center;
  gap: 10px;
  width: 108px;
  flex: none;
`;

const SideLabel = styled.label`
  margin: 0 -4px 0 auto;
  color: #a6a6a6;
`;

const HeadButton = styled.button`
  display: flex;
  align-items: center;
  justify-content: center;
  width: ${props => props.$w}px;
  height: 20px;
  font-weight: 500;
  background: ${props => (props.$on ? "#0061ab" : props.$off ? "#2c2c2c" : "#383838")};
  color: ${props => (props.$off ? "#8c8c8c" : "#fff")};
`;

const Body = styled.div`
  height: 504px;
  padding: 7px 8px 0;
  background: #5a5a5a;
  font-family: ${pluginSans};
  font-size: 14px;
`;

const Brand = styled.div`
  display: flex;
  justify-content: space-between;
  height: 58px;
  padding: 0 20px 0 45px;
  color: #ebe3dd;
`;

const Xenon = styled.div`
  width: 50px;
  height: 50px;
  padding: 1px 3px;
  border: 3px solid #ebe3dd;
  font-size: 9px;
  line-height: 10px;
`;

const Symbol = styled.div`
  font-size: 25px;
  line-height: 26px;
  font-weight: 500;
  text-align: center;
`;

const Logo = styled.div`
  position: relative;
  width: 107px;
  font-family: ${humanist};
  font-size: 30px;
  line-height: 26px;
  font-weight: 600;
`;

const LogoLine = styled.div`
  text-align: ${props => (props.$right ? "right" : "left")};
`;

const LogoDot = styled.i`
  position: absolute;
  left: 54px;
  top: 26px;
  width: 5px;
  height: 5px;
  border-radius: 3px;
  background: #ff6b2a;
`;

const PresetRow = styled.div`
  display: flex;
  gap: 8px;
`;

const CreamButton = styled.button`
  flex: none;
  width: ${props => props.$w}px;
  height: ${props => props.$h || 28}px;
  border: 2px solid #e8e0da;
  border-radius: ${props => (props.$h > 40 ? 16 : 8)}px;
  background: #f3ede8;
  color: #484848;
`;

const PresetSelect = styled.span`
  position: relative;
  display: flex;
  flex: 1;
  align-items: center;
  height: 29px;
  border: 1px solid #73838a;
  border-radius: 3px;
  background: #212b30;
  font-family: ${humanist};
  svg {
    position: absolute;
    right: 11px;
    color: #f3f3f3;
    pointer-events: none;
  }
`;

const PresetInput = styled.select`
  appearance: none;
  width: 100%;
  height: 100%;
  padding: 0 4px;
  font-size: 13px;
  font-weight: 600;
  color: #8f9496;
`;

const Panels = styled.div`
  display: grid;
  grid-template-columns: 246fr 206fr 251fr;
  gap: 19px;
  padding: 8px 4px 0;
`;

const Panel = styled.div`
  height: 390px;
  padding: 10px 7px 0 9px;
  border: 2px solid #ebe3dd;
  border-radius: 6px;
`;

const LeftGrid = styled.div`
  display: grid;
  grid-template-columns: 65px 65px 84px;
  grid-template-rows: repeat(3, 112px);
  gap: 8px 0;
  align-items: end;
`;

const RightGrid = styled(LeftGrid)`
  grid-template-columns: 92px 65px 65px;
  justify-content: end;
  > :nth-child(3n + 1) {
    justify-self: start;
  }
`;

const Pads = styled.div`
  grid-column: 1 / 3;
  grid-row: 2 / 4;
  align-self: start;
  display: flex;
  flex-direction: column;
  align-items: center;
  gap: 56px;
  padding: 30px 0 0 4px;
`;

const Center = styled.div`
  display: flex;
  flex-direction: column;
  align-items: center;
  padding-top: 19px;
`;

const ModPair = styled.div`
  display: flex;
  margin-top: 23px;
`;

const KnobWrap = styled.div`
  display: flex;
  flex-direction: column;
  align-items: center;
  color: #fff;
  line-height: 20px;
  font-weight: 500;
  margin-bottom: ${props => (props.$big ? 18 : 0)}px;
`;

const KnobFace = styled.div`
  position: relative;
`;

const KnobInput = styled.input`
  position: absolute;
  inset: 0;
  width: 100%;
  height: 100%;
  opacity: 0;
  cursor: pointer;
`;

const Mod = styled.label`
  display: flex;
  flex-direction: column;
  align-items: center;
  width: 65px;
  font-family: ${humanist};
  font-size: 13px;
  font-weight: 600;
  line-height: 20px;
  white-space: nowrap;
  color: #fff;
`;

const ModBar = styled.input`
  appearance: none;
  writing-mode: vertical-lr;
  direction: rtl;
  width: 25px;
  height: 68px;
  border: 1px solid #000;
  background: #c0c0c0;
  &::-webkit-slider-thumb {
    appearance: none;
    width: 0;
    height: 0;
  }
`;

const Footer = styled.footer`
  height: 33px;
  line-height: 30px;
  text-align: center;
  font-family: ${pluginSans};
  font-size: 21px;
`;

const polar = (cx, cy, r, deg) => {
  const a = ((deg - 90) * Math.PI) / 180;
  return [cx + r * Math.cos(a), cy + r * Math.sin(a)];
};

const arc = (cx, cy, r, from, to) => {
  const [x1, y1] = polar(cx, cy, r, from);
  const [x2, y2] = polar(cx, cy, r, to);
  return `M${x1} ${y1}A${r} ${r} 0 ${to - from > 180 ? 1 : 0} 1 ${x2} ${y2}`;
};

const Knob = ({ label, text, start, big, bipolar }) => {
  const [value, setValue] = useState(start);
  const w = big ? 136 : 84;
  const h = big ? 118 : 72;
  const cx = w / 2;
  const cy = big ? 66 : 35;
  const r = big ? 53.5 : 28.5;
  const deg = -135 + value * 2.7;
  const [dx, dy] = polar(cx, cy, r + 7.5, deg);
  const [px1, py1] = polar(cx, cy, 10, deg);
  const [px2, py2] = polar(cx, cy, big ? 40 : 15, deg);
  const id = label.replace(" ", "");
  return (
    <KnobWrap $big={big}>
      <label htmlFor={id}>{label}</label>
      <KnobFace>
        <svg width={w} height={h} viewBox={`0 0 ${w} ${h}`} fill="none" strokeLinecap="round" overflow="visible">
          <defs>
            <linearGradient id={id + "face"} x2="0" y2="1">
              <stop stopColor="#f9f3ee" />
              <stop offset="1" stopColor="#ebe5df" />
            </linearGradient>
            <radialGradient id={id + "glow"}>
              <stop offset={big ? ".84" : ".7"} stopColor="#fff4ea" stopOpacity=".65" />
              <stop offset="1" stopColor="#fff4ea" stopOpacity="0" />
            </radialGradient>
          </defs>
          <circle cx={cx} cy={cy} r={big ? 49 : 24} fill="#000" fillOpacity=".15" />
          <circle cx={cx} cy={cy + 3} r={big ? 51 : 25} fill={`url(#${id}glow)`} />
          <path d={arc(cx, cy, r, -135, 135)} stroke="#c4beb9" strokeWidth="3" />
          {bipolar ? (
            <circle cx={cx} cy={cy - r} r="1.5" fill="#ff6b2a" />
          ) : (
            <>
              <path d={arc(cx, cy, r, -135, Math.max(deg, -134.9))} stroke="#ff6b2a" strokeWidth="3" />
              <circle cx={dx} cy={dy} r="3.200" fill="#ff6b2a" />
            </>
          )}
          <circle cx={cx} cy={cy} r={big ? 44.5 : 19.5} fill={`url(#${id}face)`} stroke="#fffaf6" />
          <path d={`M${px1} ${py1}L${px2} ${py2}`} stroke="#505050" strokeWidth="2.500" />
        </svg>
        <KnobInput id={id} type="range" value={value} onChange={e => setValue(Number(e.target.value))} />
      </KnobFace>
      <span>{text}</span>
    </KnobWrap>
  );
};

const ModSlider = ({ label, text }) => (
  <Mod>
    {label}
    <ModBar type="range" defaultValue={0} />
    <span>{text}</span>
  </Mod>
);

const PluginWindow = () => (
  <Window>
    <WindowTitle>
      <CloseDot aria-label="Close" />
      <h1>Dead Time</h1>
      <PopOut aria-label="Detach">
        <PanelIcon up />
      </PopOut>
    </WindowTitle>
    <WindowHeader>
      <Power aria-label="Power">
        <Icon w={26} h={26} sw={2}>
          <path d="M13 2v10M7 4.500a10.300 10.300 0 1 0 12 0" />
        </Icon>
      </Power>
      <HeaderRows>
        <HeaderRow>
          <SelectWrap $w={270} $bg="#363636">
            <Select aria-label="Setting" $color="#666" $tight>
              <option>Manual</option>
            </Select>
            <Chevron />
          </SelectWrap>
          <SideLabel htmlFor="chain">Side Chain:</SideLabel>
          <Side>
            <SelectWrap $grow $bg="#363636">
              <Select id="chain">
                <option>Inst 1</option>
              </Select>
              <UpDown />
            </SelectWrap>
          </Side>
        </HeaderRow>
        <HeaderRow>
          <Group>
            <HeadButton $w={33} aria-label="Previous">
              <Icon w={8} h={12} sw={1.500}>
                <path d="M6.500 1L1.500 6l5 5" />
              </Icon>
            </HeadButton>
            <HeadButton $w={33} aria-label="Next">
              <Icon w={8} h={12} sw={1.500}>
                <path d="M1.500 1l5 5-5 5" />
              </Icon>
            </HeadButton>
          </Group>
          <Group>
            <HeadButton $w={68} $on>
              Compare
            </HeadButton>
          </Group>
          <Group>
            <HeadButton $w={56}>Copy</HeadButton>
            <HeadButton $w={58} $off>
              Paste
            </HeadButton>
          </Group>
          <Group>
            <HeadButton $w={56}>Undo</HeadButton>
            <HeadButton $w={57} $off>
              Redo
            </HeadButton>
          </Group>
          <SideLabel htmlFor="view">View:</SideLabel>
          <Side>
            <SelectWrap $grow $bg="#363636">
              <Select id="view">
                <option>Editor</option>
              </Select>
              <UpDown />
            </SelectWrap>
            <Group>
              <HeadButton $w={31} aria-label="Link">
                <LinkIcon />
              </HeadButton>
            </Group>
          </Side>
        </HeaderRow>
      </HeaderRows>
    </WindowHeader>
    <Body>
      <Brand>
        <Xenon>
          135
          <Symbol>Xe</Symbol>
        </Xenon>
        <Logo>
          <LogoLine>dead</LogoLine>
          <LogoLine $right>time</LogoLine>
          <LogoDot />
        </Logo>
      </Brand>
      <PresetRow>
        <CreamButton $w={143}>Save</CreamButton>
        <CreamButton $w={67}>&lt;</CreamButton>
        <PresetSelect>
          <PresetInput aria-label="Load Preset">
            <option>Load Preset</option>
          </PresetInput>
          <Icon w={16} h={8} sw={2}>
            <path d="M1.500 1.500L8 6l6.500-4.500" />
          </Icon>
        </PresetSelect>
        <CreamButton $w={67}>&gt;</CreamButton>
        <CreamButton $w={146}>Delete</CreamButton>
      </PresetRow>
      <Panels>
        <Panel>
          <LeftGrid>
            <ModSlider label="Rate" text="0.00 Hz" />
            <ModSlider label="Amount" text="0.000" />
            <Knob label="FB" text="95 %" start={95} />
            <Pads>
              <CreamButton $w={80} $h={59}>
                Bypass
              </CreamButton>
              <CreamButton $w={80} $h={59}>
                Poison
              </CreamButton>
            </Pads>
            <Knob label="Widen" text="0 %" start={50} bipolar />
            <Knob label="Gain" text="0.0 dB" start={50} bipolar />
          </LeftGrid>
        </Panel>
        <Panel>
          <Center>
            <Knob label="Delay Time" text="61.16 ms" start={33} big />
            <CreamButton $w={70} $h={26}>
              Sync
            </CreamButton>
            <ModPair>
              <ModSlider label="Rate" text="0.00 Hz" />
              <ModSlider label="Depth" text="0.0" />
            </ModPair>
          </Center>
        </Panel>
        <Panel>
          <RightGrid>
            <Knob label="LPF" text="20.0 kHz" start={100} />
            <ModSlider label="Rate" text="0.00 Hz" />
            <ModSlider label="Freq" text="20" />
            <Knob label="HPF" text="20 Hz" start={0} />
            <ModSlider label="Rate" text="0.00 Hz" />
            <ModSlider label="Freq" text="20.0" />
            <Knob label="Mix" text="50 %" start={50} />
            <ModSlider label="Rate" text="0.00" />
            <ModSlider label="Amount" text="0.000" />
          </RightGrid>
        </Panel>
      </Panels>
    </Body>
    <Footer>Dead Time</Footer>
  </Window>
);

const App = () => (
  <>
    <GlobalStyle />
    <Page>
      <TopBar />
      <Tracks />
      <PianoRoll />
      <PluginWindow />
    </Page>
  </>
);

export default App;
